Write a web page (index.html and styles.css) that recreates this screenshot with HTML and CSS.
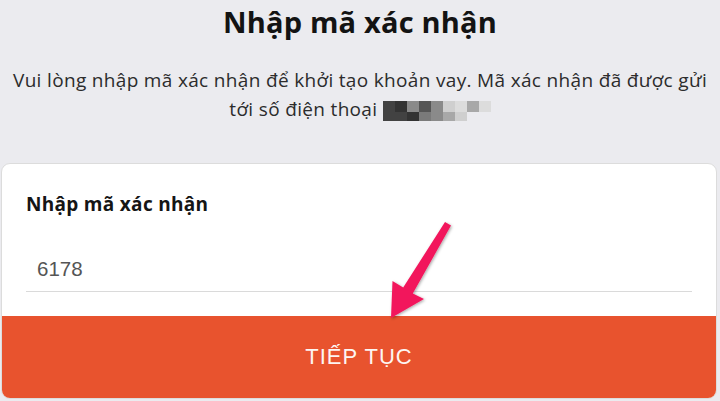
FILE: index.html
```html
<!DOCTYPE html>
<html lang="vi">
<head>
<meta charset="utf-8">
<link rel="stylesheet" href="styles.css">
</head>
<body>
<div class="page">
  <header class="intro">
    <h1 class="title">Nhập mã xác nhận</h1>
    <p class="desc">Vui lòng nhập mã xác nhận để khởi tạo khoản vay. Mã xác nhận đã được gửi<br>tới số điện thoại <span class="mask"><span class="row"><i class="c2"></i><i class="c1"></i><i class="c3"></i><i class="c2b"></i><i class="c3"></i><i class="c5"></i><i class="c6"></i><i class="c4"></i><i class="c6"></i></span><span class="row"><i class="c2"></i><i class="c2"></i><i class="c1"></i><i class="c3b"></i><i class="c3"></i><i class="c4"></i><i class="c5"></i></span></span></p>
  </header>
  <section class="card">
    <div class="card-body">
      <label class="label">Nhập mã xác nhận</label>
      <div class="field">6178</div>
    </div>
    <button class="cta">TIẾP TỤC</button>
  </section>
  <svg class="arrow" width="720" height="401" viewBox="0 0 720 401">
    <defs>
      <filter id="sh" x="-20%" y="-20%" width="140%" height="140%">
        <feDropShadow dx="1" dy="1" stdDeviation="1.5" flood-color="#000" flood-opacity="0.35"/>
      </filter>
    </defs>
    <polygon filter="url(#sh)" fill="#f2175b" points="391,318 392.5,281 403.2,287.6 445,222 451,225.6 412.8,293.4 424,299"/>
  </svg>
</div>
</body>
</html>
```
FILE: styles.css
```css
* { box-sizing: border-box; }
html, body { margin: 0; padding: 0; }
body {
  background: #ebebef;
  font-family: "Open Sans", "Noto Sans", sans-serif;
  width: 720px;
  height: 401px;
  overflow: hidden;
}
.page { position: relative; width: 720px; height: 401px; }
.intro { text-align: center; padding-top: 1px; }
.title {
  margin: 0;
  font-size: 29px;
  font-weight: 700;
  color: #131313;
  line-height: 42px;
  letter-spacing: 0.2px;
}
.desc {
  margin: 23px 0 0;
  font-size: 19px;
  color: #2c2c2c;
  line-height: 29px;
  letter-spacing: 0.33px;
}
.mask {
  display: inline-block;
  overflow: hidden;
  vertical-align: -5px;
  width: 108px;
  height: 20px;
}
.mask .row { display: flex; }
.mask .row:first-child { height: 11px; }
.mask .row + .row { height: 9px; }
.mask i { width: 12px; height: 100%; display: block; }
.c1 { background: #333; }
.c2 { background: #424242; }
.c2b { background: #555; }
.c3 { background: #8a8a8a; }
.c3b { background: #7a7a7a; }
.c4 { background: #a8a8a8; }
.c5 { background: #cfcfcf; }
.c6 { background: #dcdcdc; }
.card {
  margin: 39px 0 0 1px;
  width: 716px;
  height: 236px;
  background: #fff;
  border: 1px solid #dcdcdc;
  border-radius: 9px;
  overflow: hidden;
  display: flex;
  flex-direction: column;
}
.card-body { padding: 28px 24px 0 24px; }
.label {
  display: block;
  font-size: 19px;
  font-weight: 700;
  color: #151515;
  letter-spacing: 0.3px;
  line-height: 24px;
}
.field {
  margin-top: 41px;
  padding: 0 0 10px 11px;
  font-family: "Liberation Sans", Arial, sans-serif;
  font-size: 20.5px;
  color: #555;
  line-height: 24px;
  border-bottom: 1px solid #dadada;
  width: 666px;
}
.cta {
  margin-top: 24px;
  height: 82px;
  border: 0;
  background: #e8532e;
  color: #fdf5f2;
  font-family: "Liberation Sans", Arial, sans-serif;
  font-size: 22px;
  letter-spacing: 1px;
  width: 100%;
  padding: 0;
}
.arrow { position: absolute; left: 0; top: 0; pointer-events: none; }
```
